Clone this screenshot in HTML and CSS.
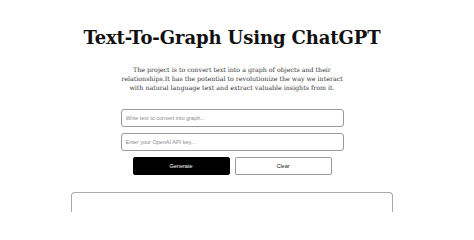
FILE: index.html
```html
<!DOCTYPE html>
<html lang="en">
<head>
<meta charset="utf-8">
<title>Text-To-Graph Using ChatGPT</title>
<link rel="stylesheet" href="styles.css">
</head>
<body>
<div class="page">
  <h1 class="title">Text-To-Graph Using ChatGPT</h1>
  <p class="intro">The project is to convert text into a graph of objects and their relationships.It has the potential to revolutionize the way we interact with natural language text and extract valuable insights from it.</p>
  <div class="form">
    <input class="field" type="text" placeholder="Write text to convert into graph...">
    <input class="field" type="text" placeholder="Enter your OpenAI API key...">
    <div class="actions">
      <button class="btn btn-primary">Generate</button>
      <button class="btn btn-secondary">Clear</button>
    </div>
  </div>
  <div class="graph"></div>
</div>
</body>
</html>
```
FILE: styles.css
```css
html, body {
  margin: 0;
  padding: 0;
  background: #ffffff;
  height: 100%;
  overflow: hidden;
}
.page {
  width: 464px;
  display: flex;
  flex-direction: column;
  align-items: center;
  padding-top: 25px;
}
.title {
  margin: 0;
  font-family: "DejaVu Serif", "Liberation Serif", serif;
  font-weight: bold;
  font-size: 18px;
  line-height: 26px;
  color: #111111;
  letter-spacing: -0.1px;
}
.intro {
  margin: 14px 0 0 0;
  width: 236px;
  text-align: center;
  font-family: "DejaVu Serif", "Liberation Serif", serif;
  font-size: 6.3px;
  line-height: 9px;
  color: #333333;
}
.form {
  margin-top: 17px;
  width: 223px;
  display: flex;
  flex-direction: column;
  align-items: center;
  gap: 6px;
}
.field {
  box-sizing: border-box;
  width: 223px;
  height: 18px;
  margin: 0;
  padding: 0 4px;
  border: 1px solid #9a9a9a;
  border-radius: 3px;
  font-family: "Liberation Sans", Arial, sans-serif;
  font-size: 5.5px;
  color: #333;
  background: #fff;
  outline: none;
}
.field::placeholder {
  color: #8a8a8a;
}
.actions {
  display: flex;
  gap: 5px;
}
.btn {
  box-sizing: border-box;
  width: 97px;
  height: 18px;
  margin: 0;
  padding: 0;
  border-radius: 2px;
  font-family: "Liberation Sans", Arial, sans-serif;
  font-size: 5.5px;
  cursor: pointer;
}
.btn-primary {
  background: #000000;
  color: #ffffff;
  border: 1px solid #000000;
}
.btn-secondary {
  background: #ffffff;
  color: #222222;
  border: 1px solid #9a9a9a;
}
.graph {
  box-sizing: border-box;
  margin-top: 17px;
  width: 322px;
  height: 20px;
  flex-shrink: 0;
  border: 1px solid #a8a8a8;
  border-bottom: none;
  border-radius: 4px 4px 0 0;
}
```
